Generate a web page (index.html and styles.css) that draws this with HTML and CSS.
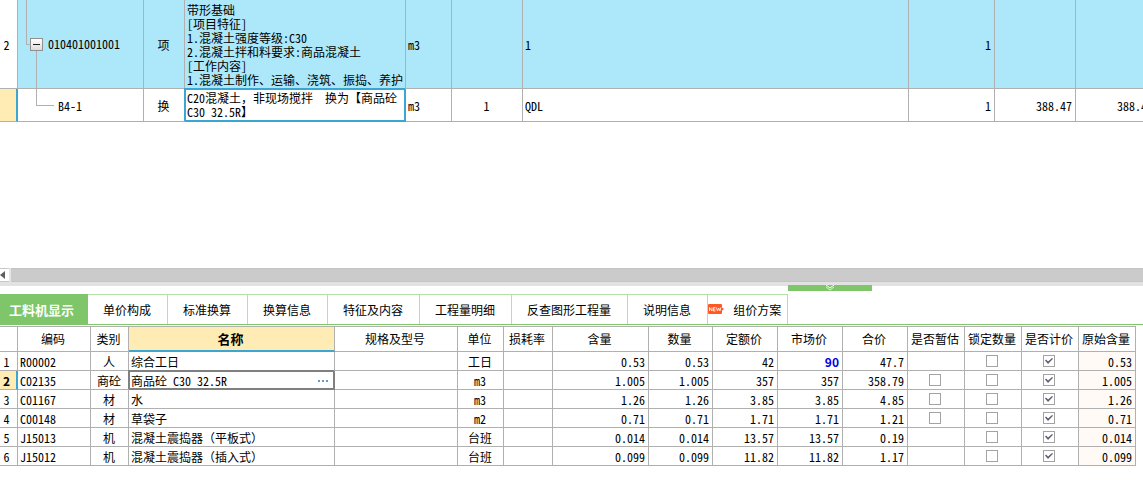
FILE: index.html
```html
<!DOCTYPE html>
<html lang="zh-CN">
<head>
<meta charset="utf-8">
<title>工料机显示</title>
<link rel="stylesheet" href="styles.css">
</head>
<body>
<main class="app">
  <section class="upper">
    <table class="grid bill">
      <colgroup><col class="w18"><col class="w126"><col class="w41"><col class="w221"><col class="w46"><col class="w71"><col><col class="w86"><col class="w81"><col class="w81"></colgroup>
      <tbody>
        <tr class="item">
          <td class="rownum">2</td>
          <td class="tree parent"><div class="node"><button class="toggle" type="button" aria-label="折叠"></button>010401001001</div></td>
          <td class="c">项</td>
          <td class="desc">带形基础<br>[项目特征]<br>1.混凝土强度等级:C30<br>2.混凝土拌和料要求:商品混凝土<br>[工作内容]<br>1.混凝土制作、运输、浇筑、振捣、养护</td>
          <td>m3</td><td></td><td>1</td><td class="r">1</td><td></td><td></td>
        </tr>
        <tr class="quota">
          <td class="rownum current"></td>
          <td class="tree child"><div class="node leaf">B4-1</div></td>
          <td class="c">换</td>
          <td class="desc picked">C20<span class="full">混凝土，非现场搅拌　换为【商品砼</span>C30 32.5R<span class="full">】</span></td>
          <td>m3</td><td class="c">1</td><td>QDL</td><td class="r">1</td><td class="r">388.47</td><td class="r">388.47</td>
        </tr>
      </tbody>
    </table>
  </section>

  <div class="hscroll">
    <button class="hscroll-left" type="button" aria-label="向左滚动"><svg width="5" height="8" viewBox="0 0 5 8"><path d="M5 0v8L0 4z" fill="#606060"/></svg></button>
    <div class="hscroll-thumb"></div>
  </div>
  <div class="splitter">
    <button class="handle" type="button" aria-label="收起"><svg width="10" height="6" viewBox="0 0 10 6" fill="none" stroke="#fff"><path d="M1 0l4 3 4-3" stroke-width="1"/><path d="M1 2l4 3 4-3" stroke="#d9f0cf" stroke-width="1"/></svg></button>
  </div>

  <section class="lower">
    <nav class="tabs">
      <button type="button" class="tab active">工料机显示</button>
      <button type="button" class="tab">单价构成</button>
      <button type="button" class="tab">标准换算</button>
      <button type="button" class="tab">换算信息</button>
      <button type="button" class="tab">特征及内容</button>
      <button type="button" class="tab">工程量明细</button>
      <button type="button" class="tab">反查图形工程量</button>
      <button type="button" class="tab">说明信息</button>
      <button type="button" class="tab fresh"><svg width="16" height="10" viewBox="0 0 16 10" aria-hidden="true"><path d="M1 0h12q1 0 1 1v2.500l2 1.500-2 1.500V9q0 1-1 1H1q-1 0-1-1V1q0-1 1-1z" fill="#ff5a26"/><path d="M1.500 7V3.500l2.500 3.500V3.500M7.500 3.500H5.500V7h2M5.500 5.200h1.800M8.500 3.500l1 3.500 1.200-3 1.200 3 1-3.500" fill="none" stroke="#ffe3d8"/></svg>组价方案</button>
    </nav>

    <table class="grid parts">
      <colgroup><col class="w18"><col class="w73"><col class="w38"><col class="w206"><col><col class="w46"><col class="w49"><col class="w96"><col class="w64"><col class="w65"><col class="w65"><col class="w65"><col class="w57"><col class="w57"><col class="w57"><col class="w57"></colgroup>
      <thead>
        <tr><th></th><th>编码</th><th>类别</th><th class="sorted">名称</th><th>规格及型号</th><th>单位</th><th>损耗率</th><th>含量</th><th>数量</th><th>定额价</th><th>市场价</th><th>合价</th><th>是否暂估</th><th>锁定数量</th><th>是否计价</th><th>原始含量</th></tr>
      </thead>
      <tbody>
        <tr><td class="rownum">1</td><td>R00002</td><td class="c">人</td><td>综合工日</td><td></td><td class="c">工日</td><td></td><td class="r">0.53</td><td class="r">0.53</td><td class="r">42</td><td class="r edited">90</td><td class="r">47.7</td><td class="k"></td><td class="k"><input type="checkbox" aria-label="锁定数量"></td><td class="k"><input type="checkbox" checked aria-label="是否计价"></td><td class="r orig">0.53</td></tr>
        <tr><td class="rownum current">2</td><td>C02135</td><td class="c">商砼</td><td class="focused"><div class="editor"><span>商品砼 C30 32.5R</span><button class="more" type="button" aria-label="更多"><i></i><i></i><i></i></button></div></td><td></td><td class="c">m3</td><td></td><td class="r">1.005</td><td class="r">1.005</td><td class="r">357</td><td class="r">357</td><td class="r">358.79</td><td class="k"><input type="checkbox" aria-label="是否暂估"></td><td class="k"><input type="checkbox" aria-label="锁定数量"></td><td class="k"><input type="checkbox" checked aria-label="是否计价"></td><td class="r orig">1.005</td></tr>
        <tr><td class="rownum">3</td><td>C01167</td><td class="c">材</td><td>水</td><td></td><td class="c">m3</td><td></td><td class="r">1.26</td><td class="r">1.26</td><td class="r">3.85</td><td class="r">3.85</td><td class="r">4.85</td><td class="k"><input type="checkbox" aria-label="是否暂估"></td><td class="k"><input type="checkbox" aria-label="锁定数量"></td><td class="k"><input type="checkbox" checked aria-label="是否计价"></td><td class="r orig">1.26</td></tr>
        <tr><td class="rownum">4</td><td>C00148</td><td class="c">材</td><td>草袋子</td><td></td><td class="c">m2</td><td></td><td class="r">0.71</td><td class="r">0.71</td><td class="r">1.71</td><td class="r">1.71</td><td class="r">1.21</td><td class="k"><input type="checkbox" aria-label="是否暂估"></td><td class="k"><input type="checkbox" aria-label="锁定数量"></td><td class="k"><input type="checkbox" checked aria-label="是否计价"></td><td class="r orig">0.71</td></tr>
        <tr><td class="rownum">5</td><td>J15013</td><td class="c">机</td><td class="full">混凝土震捣器（平板式）</td><td></td><td class="c">台班</td><td></td><td class="r">0.014</td><td class="r">0.014</td><td class="r">13.57</td><td class="r">13.57</td><td class="r">0.19</td><td class="k"></td><td class="k"><input type="checkbox" aria-label="锁定数量"></td><td class="k"><input type="checkbox" checked aria-label="是否计价"></td><td class="r orig">0.014</td></tr>
        <tr><td class="rownum">6</td><td>J15012</td><td class="c">机</td><td class="full">混凝土震捣器（插入式）</td><td></td><td class="c">台班</td><td></td><td class="r">0.099</td><td class="r">0.099</td><td class="r">11.82</td><td class="r">11.82</td><td class="r">1.17</td><td class="k"></td><td class="k"><input type="checkbox" aria-label="锁定数量"></td><td class="k"><input type="checkbox" checked aria-label="是否计价"></td><td class="r orig">0.099</td></tr>
      </tbody>
    </table>
  </section>
</main>
</body>
</html>
```
FILE: styles.css
```css
:root {
  --line: #b0b0b0;
  --blue: #3ba6d2;
  --green: #7fc56a;
  --pale-green: #b5e3a3;
  --amber: #ffecb5;
}
* { box-sizing: border-box; }
body, button {
  font-family: "Noto Sans CJK SC", "Liberation Sans", sans-serif;
  font-size: 12px;
  font-feature-settings: "hwid";
  color: #000;
}
body { margin: 0; background: #fff; }
button { border: 0; padding: 0; margin: 0; background: none; }
.app { display: flex; flex-direction: column; min-height: 100vh; }
.upper { flex: 1; overflow: hidden; }
.lower { padding-bottom: 28px; }

/* full-width punctuation keeps its whole cell */
.full { font-feature-settings: normal; }

.grid { table-layout: fixed; border-collapse: separate; border-spacing: 0; line-height: 14px; }
.grid td, .grid th {
  padding: 2px 2px 0;
  border-right: 1px solid var(--line);
  border-bottom: 1px solid var(--line);
  font-weight: 400;
  text-align: left;
  vertical-align: middle;
  white-space: nowrap;
}
.w18 { width: 18px; } .w38 { width: 38px; } .w41 { width: 41px; } .w46 { width: 46px; }
.w49 { width: 49px; } .w57 { width: 57px; } .w64 { width: 64px; } .w65 { width: 65px; }
.w71 { width: 71px; } .w73 { width: 73px; } .w81 { width: 81px; }
.w86 { width: 86px; } .w96 { width: 96px; } .w126 { width: 126px; } .w206 { width: 206px; }
.w221 { width: 221px; }
.grid .c, .grid th { padding-right: 3px; text-align: center; }
.grid th { padding: 0 4px 0 2px; }
.grid .r { padding-right: 3px; text-align: right; }
.grid .k { padding: 0 2px 0 0; text-align: center; line-height: 0; }
.grid .rownum { padding-right: 6px; text-align: center; background: #fff; }
.grid .current {
  background: var(--amber);
  border-right: 2px solid var(--blue);
  padding-right: 5px;
  font-weight: 700;
  font-feature-settings: normal;
}

/* bill of quantities: runs past the right edge of the window */
.bill { width: calc(100% + 14px); }
.item td { height: 89px; background: #ade8fa; }
.quota td { height: 33px; }
.grid .desc { padding-top: 0; white-space: normal; }
.item .desc { padding-top: 2px; }
.grid .picked {
  border-color: var(--blue);
  background: #fff;
  box-shadow: -1px -1px var(--blue), inset 1px 1px var(--blue), inset -1px -1px var(--blue);
}
.grid .tree { position: relative; padding: 0; }
.node { display: flex; align-items: center; gap: 5px; padding-left: 12px; }
.leaf { padding: 2px 0 0 40px; }
.toggle {
  width: 13px;
  height: 13px;
  border: 1px solid #909090;
  background: linear-gradient(#202020, #202020) center / 7px 1px no-repeat, linear-gradient(#fff, #dcdcdc);
}
.parent::before, .parent::after, .child::before {
  content: "";
  position: absolute;
  border: 0 solid var(--line);
}
.parent::before { left: 8px; top: 0; width: 4px; height: 50%; border-width: 0 0 1px 1px; }
.parent::after { left: 18px; top: calc(50% + 7px); bottom: -1px; border-left-width: 1px; }
.child::before { left: 18px; top: 0; width: 17px; height: 50%; border-width: 0 0 1px 1px; }

.hscroll { display: flex; height: 14px; background: #e6e6e6; }
.hscroll-left {
  display: flex;
  align-items: center;
  width: 9px;
  margin-right: 2px;
  border: solid #c8c8c8;
  border-width: 1px 0;
  background: #fff;
}
.hscroll-thumb { flex: 1; background: #cbcbcb; border: solid #c4c4c4; border-width: 1px 0; }
.splitter { position: relative; height: 4px; margin-bottom: 8px; background: #e2e2e2; }
.handle {
  position: absolute;
  right: 271px;
  top: 3px;
  display: flex;
  justify-content: center;
  width: 84px;
  height: 6px;
  background: var(--green);
}

.tabs { display: flex; height: 31px; margin-bottom: 1px; border-bottom: 1px solid var(--green); }
.tab {
  display: flex;
  align-items: center;
  padding: 0 16px 0 15px;
  border-top: 1px solid var(--pale-green);
  border-right: 1px solid var(--pale-green);
  white-space: nowrap;
}
.tab.active {
  padding: 0 13px 0 9px;
  border-color: var(--green);
  background: var(--green);
  color: #fff;
  font-size: 13px;
  font-weight: 700;
}
.tab.fresh { gap: 9px; padding: 0 6px 0 0; }
.tab.fresh svg { margin-bottom: 2px; }

.parts { width: calc(100% - 7px); border-top: 1px solid var(--line); }
.parts th { height: 25px; }
.parts td { height: 19px; }
.parts .sorted { background: var(--amber); border-bottom: 2px solid var(--blue); font-size: 13px; font-weight: 700; }
.parts .edited { color: #0000e6; font-weight: 700; font-feature-settings: normal; }
.parts .orig { background: #fffaf5; }
.parts .focused {
  border-color: #808080;
  box-shadow: -1px -1px #808080, inset 1px 1px #808080, inset -1px -1px #808080;
}
.editor { display: flex; justify-content: space-between; }
.more { display: flex; align-items: center; gap: 2px; padding-right: 4px; }
.more i { width: 2px; height: 2px; background: #5b9bd5; }
input[type="checkbox"] {
  appearance: none;
  width: 12px;
  height: 12px;
  margin: 0;
  border: 1px solid #a3a3a3;
  background: #fff;
}
input[type="checkbox"]:checked::after {
  content: "";
  display: block;
  width: 8px;
  height: 6px;
  margin: 2px 1px;
  background: #5c6072;
  clip-path: polygon(0 40%, 13% 27%, 38% 60%, 88% 0, 100% 12%, 38% 100%);
}
```
